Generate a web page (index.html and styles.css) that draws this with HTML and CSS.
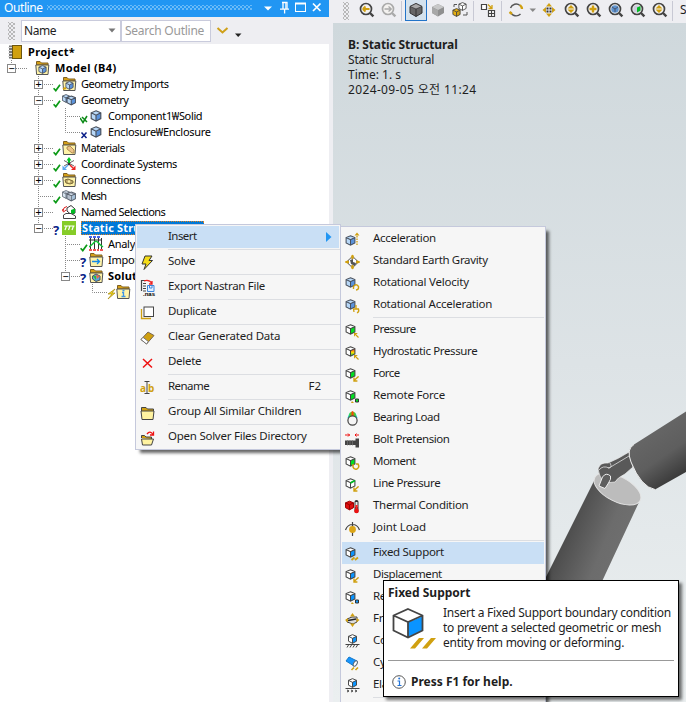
FILE: index.html
```html
<!DOCTYPE html>
<html lang="en">
<head>
<meta charset="utf-8">
<title>Outline</title>
<link rel="stylesheet" href="styles.css">
</head>
<body>
<svg class="defs" width="0" height="0" aria-hidden="true">
  <defs>
    <linearGradient id="g1" x1="0" y1="0" x2="1" y2=".45"><stop offset="0.1" stop-color="#404040"/><stop offset=".3" stop-color="#444"/><stop offset=".75" stop-color="#6c6c6c"/><stop offset="1" stop-color="#707070"/></linearGradient>
    <linearGradient id="g2" x1="0" y1="0" x2=".5" y2="1"><stop offset="0" stop-color="#505050"/><stop offset=".35" stop-color="#666"/><stop offset=".7" stop-color="#5e5e5e"/><stop offset="1" stop-color="#3c3c3c"/></linearGradient>
    <linearGradient id="rain" x1="0" y1="0" x2="0" y2="1"><stop offset="0" stop-color="#f22"/><stop offset=".5" stop-color="#fd0"/><stop offset="1" stop-color="#0c5"/></linearGradient>
    <linearGradient id="rainh" x1="0" y1="0" x2="1" y2="0"><stop offset="0" stop-color="#0bf"/><stop offset=".25" stop-color="#3d3"/><stop offset=".5" stop-color="#f40"/><stop offset=".75" stop-color="#3d3"/><stop offset="1" stop-color="#0bf"/></linearGradient>
    <symbol id="box" viewBox="0 0 12 12"><path d="M6 .8 10.8 2.8 10.8 8.6 6 11.2 1.2 8.6 1.2 2.8z" fill="var(--f,#fff)"/><path d="M6 5.2 10.8 2.8V8.6L6 11.2z" fill="var(--s,#fff)"/><path d="M6 .8 10.8 2.8 10.8 8.6 6 11.2 1.2 8.6 1.2 2.8zM1.2 2.8 6 5.2 10.8 2.8M6 5.2V11.2" fill="none" stroke="var(--k,#444)" stroke-width="1.15"/></symbol>
    <symbol id="folder" viewBox="0 0 16 16"><path d="M1.500 5V1.500H5L6.500 3H13V5z" fill="#d5a016" stroke="#806020"/><path d="M.8 5H13.800L13 14.500H1.600z" fill="#fff3a8" stroke="#555"/></symbol>
    <symbol id="tick" viewBox="0 0 8 10"><path d="M.6 6.2 2.8 8.6 7 2.8" fill="none" stroke="#0b9a16" stroke-width="1.7"/></symbol>
    <symbol id="arr" viewBox="0 0 6 6"><path d="M.6.6 5.4 5.4M.5 4V.5H4" fill="none" stroke="#d0a010" stroke-width="1.3"/></symbol>
    <symbol id="arl" viewBox="0 0 6 6"><path d="M5.6.4 1 4.600M1 1.600V5H4.400" fill="none" stroke="#d0a010" stroke-width="1.400"/></symbol>
    <symbol id="lens" viewBox="0 0 16 16"><circle cx="7" cy="7" r="5.500" fill="#f4f2f0" stroke="currentColor" stroke-width="1.700"/><path d="M11 11 14.400 14.400" stroke="currentColor" stroke-width="2.400"/></symbol>
  </defs>
</svg>

<main class="app">
  <aside class="outline">
    <header class="titlebar">
      <span class="t-title">Outline</span><span class="dots"></span>
      <svg width="70" height="14" viewBox="0 0 70 14"><path d="M8 5.500H16L12 9.500z" fill="#fff"/><path d="M26 1.500H31.500M27 1V8M31 1V8M24 8.200H33M28.600 8V12.500" stroke="#fff" stroke-width="1.300" fill="none"/><path d="M29.800 2V8" stroke="#fff"/><rect x="39.500" y="2.500" width="10" height="8" fill="none" stroke="#fff"/><path d="M39 2.500H50" stroke="#fff" stroke-width="2"/><path d="M57 2.500 64.500 10M64.500 2.500 57 10" stroke="#fff" stroke-width="1.700"/></svg>
    </header>
    <div class="filter">
      <span class="grip"></span>
      <div class="select"><span>Name</span><svg width="8" height="5"><path d="M.5.5H7.500L4 4.500z" fill="#777"/></svg></div>
      <div class="search">Search Outline</div>
      <svg width="28" height="18" viewBox="0 0 28 18"><path d="M1.500 6 6.500 10.500 11.500 6" fill="none" stroke="#cfa018" stroke-width="2"/><path d="M19 11.500H25.500L22.200 15z" fill="#222"/></svg>
    </div>

    <div class="tree">
      <svg class="lines" width="200" height="260" viewBox="0 0 200 260"><g fill="none" stroke="#888" stroke-dasharray="1 1"><path d="M11.500 16V24M12 24.500H27M38.500 32V184M38 40.500H54M38 56.500H54M38 104.500H54M38 120.500H54M38 136.500H54M38 152.500H54M38 168.500H54M38 184.500H54M65.500 64V88.500H80M65 72.500H80M65.500 192V232.500H80M65 200.500H80M65 216.500H80M92.500 240V248.500H107"/></g></svg>
      <div class="row root"><svg width="16" height="16"><rect x="1" y="1.500" width="4" height="13" fill="#777"/><rect x="4.500" y="1.500" width="9" height="13" fill="#d0a010" stroke="#6b5510"/><path d="M0 3.500H4M0 6.500H4M0 9.500H4M0 12.500H4" stroke="#ddd"/></svg><b class="l-project">Project*</b></div>
      <div class="row d1"><i class="exp">−</i><i class="st"></i><svg class="ic" width="16" height="16"><use href="#folder"/><use class="blue" href="#box" x="3" y="5" width="9" height="9"/></svg><b class="l-model">Model (B4)</b></div>
      <div class="row d2"><i class="exp">+</i><svg class="st" width="9" height="16"><use href="#tick" y="6" width="8" height="10"/></svg><svg class="ic" width="16" height="16"><use href="#folder"/><use class="blue" href="#box" x="3" y="5" width="9" height="9"/><path d="M1 13 4 12" stroke="#d0a010" stroke-width="2"/></svg><span class="l-gi">Geometry Imports</span></div>
      <div class="row d2"><i class="exp">−</i><svg class="st" width="9" height="16"><use href="#tick" y="6" width="8" height="10"/></svg><svg class="ic" width="16" height="16"><use class="blue" href="#box" x="-.5" y="2" width="9" height="9"/><use class="blue" href="#box" x="4" y="3" width="10.500" height="11"/></svg><span class="l-geo">Geometry</span></div>
      <div class="row d3"><i class="exp none"></i><svg class="st" width="9" height="16"><path d="M0 10 3 14.500 7 8M2 9 7 14" fill="none" stroke="#0b8a16" stroke-width="1.500"/></svg><svg class="ic" width="16" height="16"><use class="blue" href="#box" x="1" y="2" width="12" height="12"/></svg><span class="l-comp">Component1₩Solid</span></div>
      <div class="row d3"><i class="exp none"></i><svg class="st" width="9" height="16"><path d="M1.500 8.500 6.500 14M6.500 8.500 1.500 14" stroke="#0a1f88" stroke-width="1.500"/></svg><svg class="ic" width="16" height="16"><use class="blue" href="#box" x="1" y="2" width="12" height="12"/></svg><span class="l-enc">Enclosure₩Enclosure</span></div>
      <div class="row d2"><i class="exp">+</i><svg class="st" width="9" height="16"><use href="#tick" y="6" width="8" height="10"/></svg><svg class="ic" width="16" height="16"><use href="#folder"/><path d="M5 7 8 6 12 10V13H10L5 9z" fill="#ecc48a" stroke="#a07840" stroke-width=".8"/></svg><span class="l-mat">Materials</span></div>
      <div class="row d2"><i class="exp">+</i><svg class="st" width="9" height="16"><use href="#tick" y="6" width="8" height="10"/></svg><svg class="ic" width="16" height="16"><path d="M2 4.500 12 10M12 4.500 2 10" stroke="#555" stroke-width=".9"/><path d="M7 7V3" stroke="#00c824" stroke-width="2"/><path d="M4.500 4.500 7 1 9.500 4.500z" fill="#00c824"/><path d="M8 9 11 12" stroke="#e22" stroke-width="1.500"/><path d="M9 14H13.500V9.500z" fill="#e22"/><path d="M6 9 3 12" stroke="#5aa6ee" stroke-width="1.500"/><path d="M.5 9.500V14H5z" fill="#5aa6ee"/><circle cx="7" cy="8" r="1.300" fill="#333"/></svg><span class="l-cs">Coordinate Systems</span></div>
      <div class="row d2"><i class="exp">+</i><svg class="st" width="9" height="16"><use href="#tick" y="6" width="8" height="10"/></svg><svg class="ic" width="16" height="16"><use href="#folder"/><path d="M3 8 6 7 11 9V11L8 12 4 11z" fill="#b9a468" stroke="#7c6c3a"/><circle cx="7" cy="9.500" r="1.300" fill="#fff3a8"/></svg><span class="l-con">Connections</span></div>
      <div class="row d2"><i class="exp none"></i><svg class="st" width="9" height="16"><use href="#tick" y="6" width="8" height="10"/></svg><svg class="ic" width="16" height="16"><use class="pale" href="#box" x="-.5" y="2" width="9" height="9"/><use class="pale" href="#box" x="4" y="3" width="10.500" height="11"/><path d="M7 7V12M3 4 6 6M7 4.500 12 6" stroke="#667" stroke-width=".6"/></svg><span class="l-mesh">Mesh</span></div>
      <div class="row d2"><i class="exp">+</i><i class="st"></i><svg class="ic" width="16" height="16"><path d="M5 4 9 1.500 13 5V9L9 10.500 5 7z" fill="#fff" stroke="#333"/><path d="M9 6 13 4.500V9L9 10.500z" fill="#0b2"/><path d="M1 7Q1 3 5 2.500M0 5 1.500 8 4 6" fill="none" stroke="#d22"/><path d="M1.500 14.500V11L4 9.500H9L13.500 12V14.500z" fill="#fff" stroke="#444"/></svg><span class="l-ns">Named Selections</span></div>
      <div class="row d2"><i class="exp">−</i><i class="st q">?</i><svg class="ic" width="16" height="16"><rect width="14" height="14" y="1" fill="#86cc28"/><path d="M2 6H12.500M4.500 6 3 10M8 6 6.500 10M11.500 6 10 10" stroke="#fff" stroke-width="1.200"/></svg><b class="selected"><span class="l-static">Static Structural (B5)</span></b></div>
      <div class="row d3"><i class="exp none"></i><svg class="st" width="9" height="16"><use href="#tick" y="6" width="8" height="10"/></svg><svg class="ic" width="16" height="16"><path d="M1.500 2V13M5.500 2V13M9.500 2V13M12.500 2V13M0 4H13" stroke="#333"/><path d="M0 11Q3 9 5 6.500T9 6.500 14 11" fill="none" stroke="#18c43a" stroke-width="1.500"/><path d="M0 1H3M4 1H7M8 1H11" stroke="#13d" stroke-width="1.500"/><path d="M0 14H3M4 14H7M8 14H10M11 14H14" stroke="#e22" stroke-width="1.500"/></svg><span class="l-an">Analysis Settings</span></div>
      <div class="row d3"><i class="exp none"></i><i class="st q">?</i><svg class="ic" width="16" height="16"><use href="#folder"/><path d="M3 9.500H10.500M8 7 10.500 9.500 8 12" fill="none" stroke="#168ae8" stroke-width="1.300"/></svg><span class="l-an">Imported Load</span></div>
      <div class="row d3"><i class="exp">−</i><i class="st q">?</i><svg class="ic" width="16" height="16"><use href="#folder"/><path d="M3.500 8 7 6 11 8V12L7 13.500 3.500 11z" fill="#56a8e0" stroke="#555"/><path d="M7 7 11 8 8 11z" fill="#e64"/><path d="M4 8 7 8V12z" fill="#3b3"/></svg><b class="l-sol">Solution</b></div>
      <div class="row d4"><i class="exp none"></i><svg class="st" width="9" height="16"><path d="M8 5 1 10H5L1 15 8 9H5z" fill="#f2da18" stroke="#a88a10" stroke-width=".7"/></svg><svg class="ic" width="16" height="16"><use href="#folder"/><path d="M6.500 6.500H8.500M6 8.500H7.500V12M5.500 12.500H9.500" fill="none" stroke="#3c94e8" stroke-width="1.300"/></svg></div>
    </div>
  </aside>

  <section class="work">
    <div class="toolbar">
      <span class="grip tall"></span>
      <svg width="343" height="23" viewBox="343 0 343 23">
        <g color="#444"><use href="#lens" x="359" y="2" width="16" height="16"/><path d="M363 9H369.500M362.800 9 365.500 6.500M362.800 9 365.500 11.500" stroke="#d0a010" stroke-width="1.800"/></g>
        <g color="#aaa"><use href="#lens" x="381" y="2" width="16" height="16"/><path d="M384.500 9H391M391.500 9 388.500 6.500M391.500 9 388.500 11.500" stroke="#aaa" stroke-width="1.300"/></g>
        <path d="M401.500 1V21M473.500 1V21M501.500 1V21M672.500 1V21" stroke="#c8c9d4"/>
        <rect x="405.500" y="-1" width="21" height="21.500" fill="#d4e2ed" stroke="#2374c8"/>
        <path d="M416 3.500 422 6.500V13L416 16.500 410 13V6.500z" fill="#666" stroke="#333"/><path d="M410 6.500 416 9 422 6.500 416 3.500z" fill="#aaa" stroke="#333" stroke-width=".7"/><path d="M416 9V16.500" stroke="#333"/>
        <path d="M438 4 444 7V13L438 16.500 432 13V7z" fill="#909090"/><path d="M438 4 444 7 438 10 432 7z" fill="#c8c8c8"/><path d="M432 7 438 10V16.500L432 13z" fill="#a8a8a8"/>
        <use href="#box" x="458" y="2" width="9" height="9"/><g class="gold"><use href="#box" x="452" y="8" width="9" height="9"/></g><path d="M454 7V4.500H457M467 12V15H463" fill="none" stroke="#555"/>
        <path d="M481.500 4.500H486.500V9.500H481.500zM488.500 10.500H494.500V16.500H488.500zM491.500 10.500V16.500M488.500 13.500H494.500" fill="#fff" stroke="#444" stroke-width="1.200"/><path d="M488 4.500 491.500 8M492 5V8.500H488.500" fill="none" stroke="#d0a010" stroke-width="1.300"/>
        <path d="M510.500 8A6 6 0 0 1 520 5.500M510.500 12A6 6 0 0 0 520.500 14" fill="none" stroke="#555" stroke-width="1.400"/><path d="M520 5Q522 7 522 9M509.500 12 512 14" fill="none" stroke="#d0a010" stroke-width="2.300"/>
        <path d="M529.500 8.500H536L532.800 12z" fill="#888"/>
        <path d="M549 3 552 6.500H546zM549 17 552 13.500H546zM542.500 10 546 7V13zM555.500 10 552 7V13z" fill="#d0a010"/><path d="M546.500 7.500h2v2h-2zM549.500 7.500h2v2h-2zM546.500 10.500h2v2h-2zM549.500 10.500h2v2h-2z" fill="#333"/>
        <g color="#444"><use href="#lens" x="564" y="2" width="16" height="16"/><use href="#lens" x="586" y="2" width="16" height="16"/><use href="#lens" x="608" y="2" width="16" height="16"/><use href="#lens" x="630" y="2" width="16" height="16"/><use href="#lens" x="652" y="2" width="16" height="16"/></g>
        <path d="M567.500 8.500H574.500L571 5zM567.500 9.500H574.500L571 13zM655.500 8.500H662.500L659 5zM655.500 9.500H662.500L659 13z" fill="#d0a010"/><path d="M589.500 9H596.500M593 5.500V12.500" stroke="#d0a010" stroke-width="2.400"/>
        <circle cx="615" cy="9" r="3.800" fill="#5e93cf"/><path d="M612 7 615 9 618 7M615 9V12" stroke="#445" fill="none" stroke-width=".8"/><circle cx="637" cy="9" r="3.800" fill="#ccd"/><path d="M637 7.500 640.500 6V10.500L637 12.500z" fill="#0b2"/>
      </svg>
      <span class="cut">S</span>
    </div>
    <div class="view">
      <div class="legend"><b class="l-v1">B: Static Structural</b><span class="l-v2">Static Structural</span><span class="l-v3">Time: 1. s</span><span class="l-v4">2024-09-05 오전 11:24</span></div>
      <svg class="model" width="146" height="190" viewBox="540 400 146 190">
        <path d="M594.500 480 540 589V590H598L640 500z" fill="url(#g1)"/>
        <ellipse cx="617.500" cy="489" rx="25.500" ry="12.500" transform="rotate(27 617.500 489)" fill="#bcbcbc" stroke="#e4e4e4"/>
        <path d="M629 452Q618 459 608 463Q600 462 598 469Q599 476 604 483L615 482Q617 478 625 474L633 467z" fill="#595959" stroke="#eee" stroke-width=".7"/>
        <path d="M609 468 629 456M599 470Q603 465 609 468M610 463Q613 468 608 468" fill="none" stroke="#ddd" stroke-width=".8"/>
        <path d="M599 486 602.500 477Q606 472 610.500 476Q611.500 479 608.500 483L605 488.500z" fill="#5e5e5e" stroke="#eee"/>
        <path d="M686 411.500 634 444.500Q626 449 631 462Q641 487 655 489.500L686 472z" fill="url(#g2)"/><path d="M634 444.500Q626 449 631 462Q641 487 655 489.500" fill="none" stroke="#eee"/>
      </svg>
    </div>
  </section>
</main>

<nav class="menu context">
  <div class="item on"><span class="mi"></span><span class="m-ins">Insert</span><svg class="more" width="6" height="10"><path d="M0 0 5.500 5 0 10z" fill="#2196f3"/></svg></div>
  <div class="item"><svg class="mi" width="16" height="16"><path d="M5 1H12L9 5.500H12.500L4 14.500 6 9H2z" fill="#f4dc18" stroke="#333"/></svg><span class="m-solve">Solve</span></div>
  <div class="item"><svg class="mi" width="16" height="18"><path d="M1.500 12V1.500H6M3 4.500H6M3 7H6M3 9.500H6M3 12H6" stroke="#444" fill="none" stroke-width="1.200"/><path d="M4 2Q9 0 12 4.500M12 2V5H9" stroke="#e22" fill="none" stroke-width="1.300"/><path d="M7.500 6.500H14V12.500H7.500zM9.500 6.500V9H12V6.500" fill="#e3efff" stroke="#3b86dc"/><text x="3" y="17" class="nas">.nas</text></svg><span class="m-exp">Export Nastran File</span></div>
  <div class="item"><svg class="mi" width="16" height="16"><path d="M1.500 4V13.500H11" fill="none" stroke="#d0a010" stroke-width="1.300"/><rect x="4" y="2" width="9.500" height="9.500" fill="#fff" stroke="#444"/></svg><span class="m-dup">Duplicate</span></div>
  <div class="item"><svg class="mi" width="16" height="16"><path d="M1 9.500 8 2 14 5.500 6.500 14z" fill="#d0a010" stroke="#765"/><path d="M1 9.500 3 7.300 8.300 11.500 6.500 14z" fill="#fff" stroke="#777"/></svg><span class="m-clr">Clear Generated Data</span></div>
  <div class="item"><svg class="mi" width="16" height="16"><path d="M3 4 12 12.500M12 4 3 12.500" stroke="#e11" stroke-width="1.500"/></svg><span class="m-del">Delete</span></div>
  <div class="item"><svg class="mi" width="16" height="16"><text x="0" y="12" class="ab">a</text><text x="8" y="12" class="ab">b</text><path d="M7 1.500V13.500M4.500 1.500H9.500M4.500 13.500H9.500" stroke="#444"/></svg><span class="m-ren">Rename</span><span class="key">F2</span></div>
  <div class="item"><svg class="mi" width="16" height="16"><path d="M1.500 6V2.500H6L7.500 4H13.500V6" fill="#d0a010" stroke="#444"/><path d="M1 6H14L13 14.500H2z" fill="#fff3a0" stroke="#444"/></svg><span class="m-grp">Group All Similar Children</span></div>
  <div class="item"><svg class="mi" width="16" height="16"><path d="M1.500 8V5.500H4.500L6 7H11.500V9" fill="#d0a010" stroke="#444"/><path d="M1.500 9H13.500L11.500 15H2.500z" fill="#fff3a0" stroke="#444"/><path d="M7 4Q10 0 13 4.500M13.500 1.500V5H10" fill="none" stroke="#e11" stroke-width="1.300"/></svg><span class="m-open">Open Solver Files Directory</span></div>
</nav>

<nav class="menu sub">
  <div class="item"><svg class="mi blue" width="16" height="16"><use href="#box" x="0" y="3" width="11" height="11"/><path d="M12 4V14" stroke="#d0a010" stroke-width="1.300" stroke-dasharray="1.500 1"/><path d="M9.500 3.500H14.500L12 .5z" fill="#d0a010"/></svg><span class="s1">Acceleration</span></div>
  <div class="item"><svg class="mi" width="16" height="16"><circle cx="7.500" cy="8" r="4.300" fill="#fff" stroke="#555"/><path d="M5 6 8 5 8 8 11 9 10 12 6 10z" fill="#555"/><path d="M7.500 1V5M7.500 11V15M.5 8H4M11 8H14.500" stroke="#d0a010" stroke-width="1.800"/><path d="M5.500 3.500H9.500L7.500 .5zM5.500 12.500H9.500L7.500 15.500zM3 6V10L0 8zM12 6V10L15 8z" fill="#d0a010"/></svg><span class="s2">Standard Earth Gravity</span></div>
  <div class="item"><svg class="mi blue" width="16" height="16"><use href="#box" x="0" y="1" width="11" height="11"/><path d="M8.500 13V10.500Q11 7 13.500 10.500Q14 13.500 11 14" fill="none" stroke="#d0a010" stroke-width="1.400"/></svg><span class="s3">Rotational Velocity</span></div>
  <div class="item"><svg class="mi blue" width="16" height="16"><use href="#box" x="0" y="1" width="11" height="11"/><path d="M9 14 8.500 11H13.500Q14.500 14 12 15M11 7V11M13 12" fill="none" stroke="#d0a010" stroke-width="1.300"/></svg><span class="s4">Rotational Acceleration</span></div>
  <hr>
  <div class="item"><svg class="mi green" width="16" height="16"><use href="#box" x="0" y="1" width="11" height="11"/><use href="#arr" x="9" y="10" width="5" height="5"/></svg><span class="s5">Pressure</span></div>
  <div class="item"><svg class="mi rain" width="16" height="16"><use href="#box" x="0" y="1" width="11" height="11"/><use href="#arr" x="9" y="10" width="5" height="5"/></svg><span class="s6">Hydrostatic Pressure</span></div>
  <div class="item"><svg class="mi green" width="16" height="16"><use href="#box" x="0" y="1" width="11" height="11"/><use href="#arl" x="8" y="9" width="6" height="6"/></svg><span class="s7">Force</span></div>
  <div class="item"><svg class="mi green" width="16" height="16"><use href="#box" x="0" y="1" width="11" height="11"/><path d="M10.500 10H13.500V13H10.500z" fill="#0d2" stroke="#333"/><path d="M7 12 9 14H6z" fill="#d0a010"/></svg><span class="s8">Remote Force</span></div>
  <div class="item"><svg class="mi" width="16" height="16"><path d="M2.500 7 4.500 2 7.500 0 10.500 2 12.500 7z" fill="url(#rainh)"/><circle cx="7.500" cy="9.500" r="4.600" fill="#f5f5f5" stroke="#444" stroke-width="1.200"/></svg><span class="s9">Bearing Load</span></div>
  <div class="item"><svg class="mi" width="16" height="16"><path d="M0 2H5M10 2H14M3 .5 4.500 2 3 3.500M11.500 .5 10 2 11.500 3.500" stroke="#e11" fill="none"/><path d="M0 7.500H10.500V5.500H14V14.500H10.500V12H0z" fill="#444"/><path d="M2.500 7V12.500M5 7V12.500M7.500 7V12.500" stroke="#777" stroke-width=".7"/></svg><span class="s10">Bolt Pretension</span></div>
  <div class="item"><svg class="mi green" width="16" height="16"><use href="#box" x="0" y="1" width="11" height="11"/><path d="M8 9V12Q9 15 12 14Q15 12 13 9H11" fill="none" stroke="#d0a010" stroke-width="1.500"/></svg><span class="s11">Moment</span></div>
  <div class="item"><svg class="mi" width="16" height="16"><use href="#box" x="0" y="1" width="11" height="11"/><path d="M5.500 6 10 3.500" stroke="#0b2" stroke-width="1.800"/><use href="#arl" x="8" y="9" width="6" height="6"/></svg><span class="s12">Line Pressure</span></div>
  <div class="item"><svg class="mi red" width="16" height="16"><use href="#box" x="-.5" y="1" width="10" height="11"/><path d="M11.500 3V12" stroke="#333" stroke-width="4" stroke-linecap="round"/><path d="M11.500 3V8" stroke="#eee" stroke-width="2"/><path d="M11.500 6V13" stroke="#f22" stroke-width="2.200"/><circle cx="11.500" cy="12" r="2.300" fill="#e11"/></svg><span class="s13">Thermal Condition</span></div>
  <div class="item"><svg class="mi" width="16" height="16"><path d="M.5 9Q2.500 3.500 7.500 3.500T14.500 9M7.500 1V15" fill="none" stroke="#444" stroke-width="1.200"/><circle cx="7.500" cy="8.500" r="3.400" fill="#dba518"/></svg><span class="s14">Joint Load</span></div>
  <hr>
  <div class="item on"><svg class="mi sky" width="16" height="16"><use href="#box" x="0" y="1" width="11" height="11"/><path d="M6.500 14 9.500 11.500M10 14 13 11.500" stroke="#d0a010" stroke-width="1.800"/></svg><span class="s15">Fixed Support</span></div>
  <div class="item"><svg class="mi sky" width="16" height="16"><use href="#box" x="0" y="1" width="11" height="11"/><use href="#arl" x="8" y="9" width="6" height="6"/></svg><span class="s16">Displacement</span></div>
  <div class="item"><svg class="mi sky" width="16" height="16"><use href="#box" x="0" y="1" width="11" height="11"/><path d="M10.500 10H13.500V13H10.500z" fill="#19f" stroke="#333"/><path d="M7 12 9 14H6z" fill="#d0a010"/></svg><span class="s17">Re</span></div>
  <div class="item"><svg class="mi" width="16" height="16"><path d="M2 7 7 5H12V10L8 12 2 10z" fill="#ddd" stroke="#444"/><path d="M3 8.500 11 7" stroke="#222" stroke-width="1.500"/><path d="M5 4.500H10L7.500 1zM5 11.500H10L7.500 15zM0 8 3 6V10.500zM14.500 8 11.500 6V10.500z" fill="#d0a010"/></svg><span class="s18">Fr</span></div>
  <div class="item"><svg class="mi sky" width="16" height="16"><use href="#box" x="2" y="0" width="11" height="10"/><path d="M.5 10.500H14.500M2 13.500 3.500 11M5 13.500 6.500 11M8 13.500 9.500 11M11 13.500 12.500 11" stroke="#444"/></svg><span class="s19">Co</span></div>
  <div class="item"><svg class="mi" width="16" height="16"><path d="M1 5 4 1 12 5 9 10z" fill="#1696ff" stroke="#1478c8"/><ellipse cx="10.300" cy="7.500" rx="1.700" ry="3" transform="rotate(30 10.300 7.500)" fill="#fff" stroke="#567"/><path d="M6.500 14 9 11.500M10.500 14 13 11.500" stroke="#d0a010" stroke-width="1.600"/></svg><span class="s20">Cy</span></div>
  <div class="item"><svg class="mi sky" width="16" height="16"><use href="#box" x="2" y="0" width="11" height="10"/><path d="M.5 10.500H14.500" stroke="#444"/><path d="M2 12 4 13 2 14M6 12 8 13 6 14M10 12 12 13 10 14" fill="none" stroke="#444"/></svg><span class="s21">Ela</span></div>
  <hr>
</nav>

<div class="tip">
  <b class="tip-h"><span class="p1">Fixed Support</span></b>
  <div class="tip-b">
    <svg width="46" height="44" viewBox="0 0 46 44"><path d="M17 2 31 9V24L17 31 2.500 24V9z" fill="#fff"/><path d="M17 15.500 31 9.500V23.500L17 30z" fill="#0a94ff"/><path d="M17 2 31.500 8.500V23.500L17 30.500 2.500 23.500V8.500zM2.500 8.500 17 15 31.500 8.500M17 15V30.500" fill="none" stroke="#444" stroke-width="1.800"/><path d="M19 41.500 28 31H33L24 41.500zM31 41.500 40 31H45L36 41.500z" fill="#d0a010"/></svg>
    <p><span class="p2">Insert a Fixed Support boundary condition</span><br><span class="p3">to prevent a selected geometric or mesh</span><br><span class="p4">entity from moving or deforming.</span></p>
  </div>
  <div class="tip-f"><svg width="14" height="14"><circle cx="7" cy="7" r="6.300" fill="#fff" stroke="#555"/><path d="M5.500 6H7.500V10.500M5.500 10.500H9.500" stroke="#2374d8" fill="none" stroke-width="1.200"/><circle cx="7.200" cy="3.500" r="1" fill="#2374d8"/></svg><b class="p5">Press F1 for help.</b></div>
</div>
</body>
</html>
```

FILE: styles.css
```css
* { box-sizing: border-box; }
body { margin: 0; width: 686px; height: 702px; overflow: hidden; position: relative; background: #eeeef2; font-family: "Noto Sans", "Noto Sans CJK KR", sans-serif; font-size: 11.5px; color: #1e1e1e; }
.defs { position: absolute; }
i { font-style: normal; }
.app { display: flex; gap: 4px; height: 702px; }
.blue { --f: #b8d8f8; --s: #5b93dc; --k: #49505c; }
.pale { --f: #d8e6f2; --s: #a8c2da; --k: #5c6570; }
.green { --s: #00e020; }
.sky { --s: #0a94ff; }
.gold { --f: #e8b010; --s: #d0a010; }
.red { --f: #e01010; --s: #e01010; --k: #900; }
.rain { --s: url(#rain); }

.outline { width: 329px; background: #fff; }
.titlebar { height: 17px; background: #2196f3; color: #fff; display: flex; align-items: center; gap: 4px; padding-left: 4px; }
.titlebar svg { margin: -2px 3px 0 0; flex: none; }
.t-title { font-size: 12px; line-height: 17px; height: 17px; margin-top: -3px; letter-spacing: -.4px; }
.dots { flex: 1; height: 5px; margin-top: -3px; background: radial-gradient(circle, #6cbcf8 0.7px, transparent 0.9px) 0 0 / 4px 4px, radial-gradient(circle, #6cbcf8 0.7px, transparent 0.9px) 2px 2px / 4px 4px; }
.filter { height: 27px; background: #eeeef2; display: flex; align-items: center; padding-left: 8px; }
.grip { width: 7px; height: 18px; background: radial-gradient(circle, #999 0.6px, transparent 0.9px) 0 0 / 4px 4px, radial-gradient(circle, #999 0.6px, transparent 0.9px) 2px 2px / 4px 4px; }
.select, .search { height: 22px; border: 1px solid #c9cbdc; background: #fff; display: flex; align-items: center; justify-content: space-between; font-size: 12px; }
.select { width: 100px; margin-left: 6px; padding: 0 4px 0 2px; letter-spacing: -.4px; }
.search { width: 90px; padding-left: 3px; color: #999; margin-right: 5px; white-space: nowrap; letter-spacing: -.25px; }

.tree { position: relative; font-size: 11px; color: #000; }
.lines { position: absolute; left: 0; top: 0; }
.row { height: 16px; display: flex; align-items: center; position: relative; white-space: nowrap; line-height: 14px; }
.root { padding-left: 8px; gap: 4px; }
.d1 { padding-left: 7px; }
.d2 { padding-left: 34px; }
.d3 { padding-left: 61px; }
.d4 { padding-left: 88px; }
.exp { width: 9px; height: 9px; border: 1px solid #888; background: #fff; font: 10px/7px "DejaVu Sans Mono", monospace; display: flex; align-items: center; justify-content: center; }
.exp.none { visibility: hidden; }
.st { width: 9px; height: 16px; margin-left: 10px; flex: none; }
.q { color: #0a1f88; font: bold 13px/20px "Noto Sans", sans-serif; }
.ic { margin-right: 3px; }
.selected { background: #0078d7; color: #fff; outline: 1px dotted #e08020; outline-offset: -1px; width: 123px; padding-left: 1px; }
.l-project { letter-spacing: .3px; }
.l-model { letter-spacing: .35px; margin-left: 1px; }
.l-static, .l-sol { letter-spacing: .15px; }
.l-gi, .l-geo, .l-mat { letter-spacing: -.5px; }
.l-comp { letter-spacing: -.35px; }
.l-enc { letter-spacing: -.27px; }
.l-cs { letter-spacing: -.38px; }
.l-con { letter-spacing: -.45px; }
.l-mesh { letter-spacing: -.7px; }
.l-ns { letter-spacing: -.53px; }
.l-an { letter-spacing: -.3px; }

.work { flex: 1; display: flex; flex-direction: column; }
.toolbar { height: 23px; display: flex; position: relative; padding-left: 10px; overflow: hidden; }
.toolbar > svg { flex: none; }
.toolbar .grip { position: absolute; left: 10px; top: 2px; width: 6px; }
.cut { position: absolute; left: 347px; top: 1px; font-size: 12px; letter-spacing: -1px; }
.view { flex: 1; position: relative; background: linear-gradient(#cfd8dc, #dde3e6 50%, #ebeff0); }
.legend { display: flex; flex-direction: column; align-items: flex-start; padding: 14px 0 0 15px; font-size: 12px; line-height: 15px; }
.legend > * { white-space: nowrap; }
.l-v1 { letter-spacing: -.1px; }
.l-v2 { letter-spacing: -.18px; }
.l-v4 { letter-spacing: .36px; }
.model { position: absolute; left: 207px; top: 377px; }

.menu { position: absolute; background: #f6f6f6; border: 1px solid #c5c9dc; padding: 1px; box-shadow: 4px 4px 3px -1px rgba(0,0,0,.6); white-space: nowrap; font-size: 11.5px; letter-spacing: -.3px; }
.context { left: 135px; top: 224px; width: 206px; height: 226px; }
.sub { left: 340px; top: 226px; width: 206px; height: 490px; }
.item { display: flex; align-items: center; height: 22px; padding: 0 0 3px 4px; }
.item.on { background: #c9dff5; }
.context .item { margin-bottom: 3px; position: relative; }
.context .item:not(:last-child)::after { content: ""; position: absolute; left: 31px; right: -1px; bottom: -2px; height: 1px; background: #dcdee2; }
.mi { width: 16px; margin: 2px 12px -2px -1px; flex: none; }
.sub hr { border: 0; height: 1px; background: #dcdee2; margin: 1px 0 1px 31px; }
.more { margin: 2px 7px 0 auto; }
.key { margin-left: auto; margin-right: 18px; letter-spacing: 0; }
.m-ins, .m-ren, .s5, .s7, .s11 { letter-spacing: -.55px; }
.m-grp, .m-clr, .s3, .s8 { letter-spacing: -.21px; }
.m-open, .s4 { letter-spacing: -.25px; }
.s2 { letter-spacing: -.34px; }
.s6 { letter-spacing: -.37px; }
.s9, .s10, .s12, .s16 { letter-spacing: -.42px; }
.s14 { letter-spacing: -.08px; }
.nas { font: bold 6px "Liberation Sans", sans-serif; letter-spacing: 0; }
.ab { font: bold 10px "Noto Sans", sans-serif; fill: #d0a010; letter-spacing: 0; }

.tip { position: absolute; left: 383px; top: 580px; width: 296px; height: 117px; background: #fff; border: 1px solid #000; box-shadow: 3px 3px 3px rgba(0,0,0,.55); padding: 4px 4px 0; font-size: 12px; line-height: 15px; white-space: nowrap; }
.tip-h { display: block; height: 16px; }
.tip-b { display: flex; height: 60px; padding-top: 6px; gap: 6px; border-bottom: 1px solid #999; padding-left: 3px; }
.tip-b svg { flex: none; }
.tip p { margin: -2px 0 0; }
.p2, .p3, .p4 { letter-spacing: -.25px; }
.tip-f { display: flex; align-items: center; gap: 5px; padding: 13px 0 0 4px; }
```
